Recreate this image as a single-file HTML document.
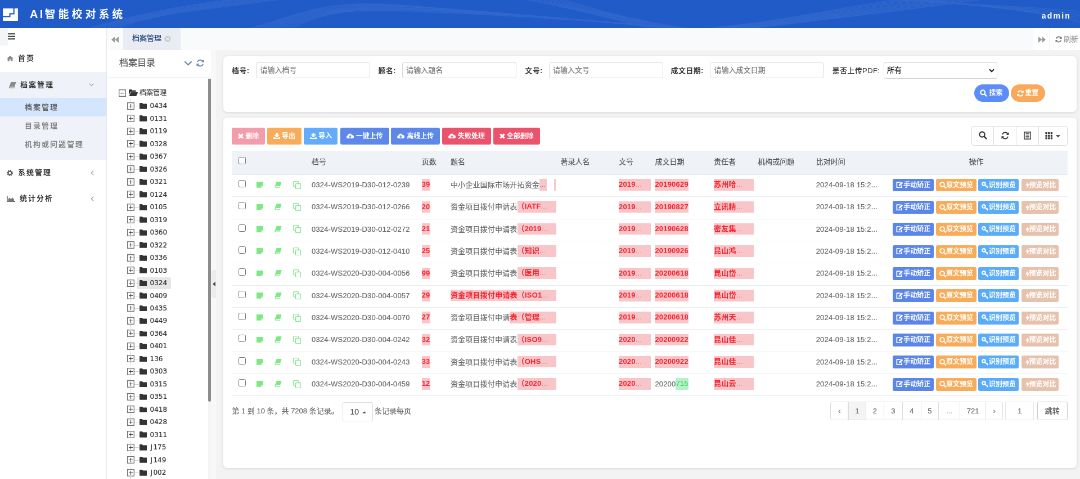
<!DOCTYPE html><html lang="zh-CN"><head><meta charset="utf-8"><title>AI智能校对系统</title><style>
*{box-sizing:border-box;margin:0;padding:0}
html,body{width:1080px;height:479px;overflow:hidden;background:#f3f3f4}
body{font-family:"Liberation Sans","Noto Sans CJK SC",sans-serif;font-size:13px;color:#676a6c;-webkit-text-stroke:.22px}
.pk,.btn,#side .it,#side .sub,#hdr div{-webkit-text-stroke:0}
.btn.ab{-webkit-text-stroke:.25px}
#app{position:absolute;left:0;top:0;width:1920px;height:852px;transform:scale(.5625);transform-origin:0 0;background:#f3f3f4;overflow:hidden;will-change:transform}
.abs{position:absolute}
#hdr{left:0;top:0;width:1920px;height:50px;background:#205bc8;overflow:hidden}
#hdr .title{left:53px;top:0;line-height:50px;color:#fff;font-size:19px;font-weight:bold;letter-spacing:4.95px;white-space:nowrap}
#hdr .title b{font-size:20px;letter-spacing:3.3px}
#hdr .user{right:16px;top:0;line-height:56px;color:#fff;font-size:14px;font-weight:bold;letter-spacing:2.2px}
#side{left:0;top:50px;width:189px;height:802px;background:#fff}
#side .it{left:0;width:189px;height:46px;line-height:46px;font-weight:bold;letter-spacing:2px;color:#333;white-space:nowrap}
#side .sub{left:0;width:189px;height:33px;line-height:33px;letter-spacing:2px;color:#858585;padding-left:44px;white-space:nowrap;font-weight:bold}
#side .grp{left:0;top:78px;width:189px;height:156px;background:#eff3f9}
#side .act{background:#d4e6fe}
#side .chev{position:absolute;right:22px;top:0;font-weight:normal;color:#999;font-size:12px;letter-spacing:0}
#tabs{left:190px;top:50px;width:1730px;height:39px;background:#f9fafb}
#tabs .tab{left:29px;top:0;width:101.5px;height:39px;background:#e9edf3;color:#1e3c78;line-height:36.5px;padding-left:16px;white-space:nowrap}
#tree{left:190px;top:89px;width:185px;height:763px;background:#fff;overflow:hidden}
#tree .hd{left:0;top:0;width:185px;height:49px;border-bottom:1px solid #eceef1;line-height:46px;padding-left:22px;font-size:16px;color:#5a5a5a}
.tn{position:absolute;height:22px;line-height:21px;font-family:"DejaVu Sans","Noto Sans CJK SC",sans-serif;font-size:12px;color:#333;white-space:nowrap}
.bx{position:absolute;width:13px;height:13px;border:1px solid #757575;background:#fff}
.bx:before{content:"";position:absolute;left:2px;top:5px;width:7px;height:1px;background:#555}
.bx.p:after{content:"";position:absolute;left:5px;top:2px;width:1px;height:7px;background:#555}
.card{background:#fff;border-radius:6.5px;box-shadow:0 1px 5px rgba(0,0,0,.13)}
label.l{position:absolute;top:0;line-height:29px;font-weight:bold;color:#333;white-space:nowrap;-webkit-text-stroke:0;letter-spacing:.4px}
.inp{position:absolute;top:0;width:203px;height:28.8px;border:1px solid #d6d9dd;border-radius:3px;background:#fff;line-height:26.8px;padding-left:6.5px;color:#767676;font-size:13px;white-space:nowrap}
.btn{position:absolute;color:#fff;font-size:12px;font-weight:bold;text-align:center;white-space:nowrap;border-radius:3px}
.tb{top:17.7px;height:30px;line-height:30px}
table{border-collapse:collapse}
.th{position:absolute;top:0;line-height:40.4px;color:#555;white-space:nowrap}
.row{position:absolute;left:0;width:1486px;height:39.35px;border-top:1px solid #e9ebee}
.c{position:absolute;top:0;line-height:35.5px;white-space:nowrap;letter-spacing:.17px}
.c.f{display:flex;align-items:center;height:35.5px}
.c.f .pk{flex:1 1 0;min-width:0;top:-.4px}
.pk{display:inline-block;background:#f8c5c9;color:#f5222d;font-weight:bold;line-height:20.6px;vertical-align:middle;position:relative;top:-1.1px;letter-spacing:.2px}
.gn{display:inline-block;background:#b5f2c6;color:#46d476;line-height:20.6px;vertical-align:middle;position:relative;top:-1.1px}
.dots{color:#c58d93;font-weight:normal}
.cb{position:absolute;width:13px;height:13px;border:1px solid #767676;border-radius:2.5px;background:#fff}
.ab{top:6.7px;height:22.8px;line-height:22.8px;font-weight:500;font-size:12px;border-radius:3px}
.pg{position:absolute;top:0;height:33px;line-height:31px;border:1px solid #ddd;text-align:center;color:#676a6c;background:#fff}
svg{display:block;position:absolute}
</style></head><body><div id="app">
<div id="hdr" class="abs">
<svg width="1920" height="50" viewBox="0 0 1920 50" style="left:0;top:0"><g fill="none" stroke="#ffffff" stroke-width="1.2" opacity=".075">
<path d="M440 52 C 520 30, 560 8, 640 7 S 950 30, 1180 48"/>
<path d="M447 52 C 525 29, 566 8, 648 8 S 960 30, 1186 48"/>
<path d="M454 52 C 530 28, 572 9, 656 9 S 970 31, 1192 49"/>
<path d="M461 52 C 535 27, 578 10, 664 10 S 980 31, 1198 49"/>
<path d="M468 52 C 540 26, 584 11, 672 11 S 990 32, 1204 50"/>
<path d="M475 52 C 545 25, 590 12, 680 13 S 1000 32, 1210 51"/>
<path d="M482 52 C 550 24, 596 12, 688 14 S 1010 33, 1216 51"/>
<path d="M489 52 C 555 23, 602 13, 696 15 S 1020 33, 1222 52"/>
<path d="M496 52 C 560 22, 608 14, 704 16 S 1030 34, 1228 52"/>
<path d="M503 52 C 565 21, 614 15, 712 17 S 1040 34, 1234 53"/>
<path d="M510 52 C 570 20, 620 16, 720 19 S 1050 35, 1240 54"/>
<path d="M517 52 C 575 19, 626 16, 728 20 S 1060 35, 1246 54"/>
<path d="M1230 52 C 1360 44, 1470 18, 1600 -2"/>
<path d="M1239 52 C 1366 43, 1478 18, 1614 -2"/>
<path d="M1248 52 C 1372 43, 1486 19, 1628 -2"/>
<path d="M1257 52 C 1378 42, 1494 20, 1642 -2"/>
<path d="M1266 52 C 1384 42, 1502 21, 1656 -2"/>
<path d="M1275 52 C 1390 41, 1510 22, 1670 -2"/>
<path d="M1284 52 C 1396 41, 1518 22, 1684 -2"/>
<path d="M1293 52 C 1402 40, 1526 23, 1698 -2"/>
<path d="M1302 52 C 1408 40, 1534 24, 1712 -2"/>
<path d="M1311 52 C 1414 39, 1542 25, 1726 -2"/>
<path d="M1320 52 C 1420 39, 1550 26, 1740 -2"/>
<path d="M1329 52 C 1426 38, 1558 26, 1754 -2"/>
<path d="M930 -2 C 1010 14, 1080 30, 1160 52"/>
<path d="M940 -2 C 1018 15, 1088 31, 1170 52"/>
<path d="M950 -2 C 1026 16, 1096 32, 1180 52"/>
<path d="M960 -2 C 1034 17, 1104 33, 1190 52"/>
<path d="M970 -2 C 1042 18, 1112 34, 1200 52"/>
<path d="M980 -2 C 1050 19, 1120 35, 1210 52"/>
<path d="M990 -2 C 1058 20, 1128 36, 1220 52"/>
<path d="M1000 -2 C 1066 21, 1136 37, 1230 52"/>
<path d="M150 52 C 230 30, 300 12, 420 -2"/>
<path d="M158 52 C 236 29, 308 13, 432 -2"/>
<path d="M166 52 C 242 28, 316 14, 444 -2"/>
<path d="M174 52 C 248 27, 324 15, 456 -2"/>
<path d="M182 52 C 254 26, 332 16, 468 -2"/>
<path d="M190 52 C 260 25, 340 17, 480 -2"/>
<path d="M198 52 C 266 24, 348 18, 492 -2"/>
<path d="M206 52 C 272 23, 356 19, 504 -2"/>
<path d="M1560 -2 C 1680 6, 1800 10, 1920 20"/>
<path d="M1576 -2 C 1690 7, 1808 11, 1920 24"/>
<path d="M1592 -2 C 1700 8, 1816 13, 1920 28"/>
<path d="M1608 -2 C 1710 9, 1824 14, 1920 32"/>
<path d="M1624 -2 C 1720 10, 1832 16, 1920 36"/>
<path d="M1640 -2 C 1730 11, 1840 17, 1920 40"/>
</g></svg>
<svg width="27" height="22" viewBox="0 0 28 23" style="left:4.6px;top:14.6px"><rect width="28" height="23" fill="#fff"/><path d="M0 15H13V9.8H20.5V0" fill="none" stroke="#205bc8" stroke-width="2.2"/></svg>
<div class="abs title"><b>AI</b>智能校对系统</div><div class="abs user">admin</div></div>
<div id="side" class="abs">
<div class="abs grp"></div>
<div class="abs" style="left:0;top:0;width:13.5px;height:31px;background:#f4f5f9"></div>
<svg width="14" height="12" viewBox="0 0 14 12" style="left:14px;top:9.3px"><path d="M0 1.2H13M0 5.7H13M0 10.2H13" stroke="#333" stroke-width="2"/></svg>
<div class="abs it" style="top:31px"><svg width="12" height="10" viewBox="0 0 12 10" style="left:12px;top:18px"><path d="M6 0L0 5H1.6V10H4.8V6.5H7.2V10H10.4V5H12Z" fill="#8a8a8a"/></svg><span style="position:absolute;left:32px">首页</span></div>
<div class="abs it" style="top:78px"><svg width="13" height="11" viewBox="0 0 13 11" style="left:16.2px;top:18px"><path d="M3.5 0H12.5L10 8.2H2.2C1.4 8.2 1.2 9.6 2 9.6H10.5L10 11H1.5C0 11 -.3 9 .6 7.4Z" fill="#8a8a8a"/></svg><span style="position:absolute;left:36px">档案管理</span><span class="chev"><svg width="9" height="6" viewBox="0 0 9 6" style="position:absolute;right:0;top:20px"><path d="M.7 .7L4.5 4.5L8.3 .7" fill="none" stroke="#999" stroke-width="1.2"/></svg></span></div>
<div class="abs sub act" style="top:124px;color:#666">档案管理</div>
<div class="abs sub" style="top:157px">目录管理</div>
<div class="abs sub" style="top:190px">机构或问题管理</div>
<div class="abs it" style="top:234px"><svg width="11" height="11" viewBox="0 0 12 12" style="left:12px;top:17.5px"><circle cx="6" cy="6" r="5" fill="none" stroke="#555" stroke-width="2" stroke-dasharray="1.96 1.96"/><circle cx="6" cy="6" r="3.3" fill="none" stroke="#555" stroke-width="2.2"/></svg><span style="position:absolute;left:32px">系统管理</span><span class="chev"><svg width="6" height="9" viewBox="0 0 6 9" style="position:absolute;right:0;top:19px"><path d="M5.3 .7L1.2 4.5L5.3 8.3" fill="none" stroke="#999" stroke-width="1.2"/></svg></span></div>
<div class="abs it" style="top:280px"><svg width="15" height="11" viewBox="0 0 15 11" style="left:12px;top:18px"><path d="M.8 0V10.2H15" fill="none" stroke="#666" stroke-width="1.7"/><path d="M2.5 9V5.5L5 3.5L7.5 6L10 3L13 6.5V9Z" fill="#777"/></svg><span style="position:absolute;left:35px">统计分析</span><span class="chev"><svg width="6" height="9" viewBox="0 0 6 9" style="position:absolute;right:0;top:19px"><path d="M5.3 .7L1.2 4.5L5.3 8.3" fill="none" stroke="#999" stroke-width="1.2"/></svg></span></div>
</div>
<div class="abs" style="left:189px;top:50px;width:1px;height:802px;background:#e4e6ea"></div>
<div id="tabs" class="abs">
<div class="abs" style="left:0;top:0;width:29px;height:39px;background:#fbfbfc"></div>
<svg width="13" height="11" viewBox="0 0 13 11" style="left:8px;top:14.5px"><path d="M6.3 0V11L0 5.5ZM13 0V11L6.7 5.5Z" fill="#9a9a9a"/></svg>
<div class="abs tab">档案管理</div>
<svg width="12" height="12" viewBox="0 0 12 12" style="left:102px;top:12.8px"><circle cx="6" cy="6" r="5.6" fill="#c9cdd3"/><path d="M3.8 3.8L8.2 8.2M8.2 3.8L3.8 8.2" stroke="#eef1f5" stroke-width="1.5"/></svg>
<div class="abs" style="left:1647px;top:0;width:83px;height:39px;background:#fff"></div>
<div class="abs" style="left:1675px;top:0;width:1px;height:39px;background:#f0f1f3"></div>
<svg width="13" height="11" viewBox="0 0 13 11" style="left:1656px;top:15px"><path d="M0 0V11L6.3 5.5ZM6.7 0V11L13 5.5Z" fill="#9a9a9a"/></svg>
<svg width="12" height="12" viewBox="0 0 12 12" style="left:1686px;top:14px"><path d="M10.3 4.2A4.6 4.6 0 0 0 1.7 4.4M1.7 7.8A4.6 4.6 0 0 0 10.3 7.6" fill="none" stroke="#777" stroke-width="1.6"/><path d="M11.5 1V5H7.5ZM.5 11V7H4.5Z" fill="#777"/></svg>
<div class="abs" style="left:1701px;top:0;line-height:39px;color:#999;white-space:nowrap">刷新</div>
</div>
<div id="tree" class="abs">
<div class="abs hd">档案目录</div>
<svg width="15" height="9" viewBox="0 0 15 9" style="left:137px;top:19px"><path d="M1.3 1.3L7.5 7.3L13.7 1.3" fill="none" stroke="#6782a8" stroke-width="2.1"/></svg>
<svg width="14" height="14" viewBox="0 0 12 12" style="left:159px;top:16px"><path d="M10.3 4.2A4.6 4.6 0 0 0 1.7 4.4M1.7 7.8A4.6 4.6 0 0 0 10.3 7.6" fill="none" stroke="#6782a8" stroke-width="1.5"/><path d="M11.6 .8V5H7.4ZM.4 11.2V7H4.6Z" fill="#6782a8"/></svg>
<div class="abs" style="left:42px;top:86px;width:0;height:700px;border-left:1px dotted #c8c8c8"></div>
<svg width="13" height="13" viewBox="0 0 13 13" style="left:21px;top:69.5px"><rect x=".6" y=".6" width="11.8" height="11.8" fill="#fff" stroke="#707070" stroke-width="1.5"/><path d="M3 6.5H10" stroke="#444" stroke-width="1.2"/></svg>
<svg width="16" height="12" viewBox="0 0 16 12" style="left:39px;top:70px"><path d="M0 1.3C0 .6 .6 0 1.3 0H4.8L6.3 1.6H11.5C12.2 1.6 12.6 2.1 12.6 2.8V4H4.2C3.4 4 2.9 4.4 2.6 5L0 10.2Z" fill="#333"/><path d="M3.9 5H15.3C15.9 5 16.2 5.4 15.9 6L13.5 11.2C13.3 11.7 12.8 12 12.2 12H.6L3.1 5.8C3.3 5.3 3.5 5 3.9 5Z" fill="#333"/></svg>
<div class="tn" style="left:58px;top:65.5px">档案管理</div>
<div class="abs" style="left:49px;top:99.3px;width:8px;height:0;border-top:1px dotted #c8c8c8"></div>
<svg width="13" height="13" viewBox="0 0 13 13" style="left:36px;top:92.8px"><rect x=".6" y=".6" width="11.8" height="11.8" fill="#fff" stroke="#707070" stroke-width="1.5"/><path d="M3 6.5H10M6.5 3V10" stroke="#444" stroke-width="1.2"/></svg>
<svg width="13.6" height="10.8" viewBox="0 0 15 12" style="left:57.6px;top:94px"><path d="M0 1.3C0 .6 .6 0 1.3 0H5.2L6.8 1.7H13.6C14.4 1.7 15 2.3 15 3V10.7C15 11.4 14.4 12 13.6 12H1.3C.6 12 0 11.4 0 10.7Z" fill="#333"/></svg>
<div class="tn" style="left:76.5px;top:89.3px">0434</div>
<div class="abs" style="left:49px;top:121.78px;width:8px;height:0;border-top:1px dotted #c8c8c8"></div>
<svg width="13" height="13" viewBox="0 0 13 13" style="left:36px;top:115.28px"><rect x=".6" y=".6" width="11.8" height="11.8" fill="#fff" stroke="#707070" stroke-width="1.5"/><path d="M3 6.5H10M6.5 3V10" stroke="#444" stroke-width="1.2"/></svg>
<svg width="13.6" height="10.8" viewBox="0 0 15 12" style="left:57.6px;top:116.48px"><path d="M0 1.3C0 .6 .6 0 1.3 0H5.2L6.8 1.7H13.6C14.4 1.7 15 2.3 15 3V10.7C15 11.4 14.4 12 13.6 12H1.3C.6 12 0 11.4 0 10.7Z" fill="#333"/></svg>
<div class="tn" style="left:76.5px;top:111.78px">0131</div>
<div class="abs" style="left:49px;top:144.26px;width:8px;height:0;border-top:1px dotted #c8c8c8"></div>
<svg width="13" height="13" viewBox="0 0 13 13" style="left:36px;top:137.76px"><rect x=".6" y=".6" width="11.8" height="11.8" fill="#fff" stroke="#707070" stroke-width="1.5"/><path d="M3 6.5H10M6.5 3V10" stroke="#444" stroke-width="1.2"/></svg>
<svg width="13.6" height="10.8" viewBox="0 0 15 12" style="left:57.6px;top:138.96px"><path d="M0 1.3C0 .6 .6 0 1.3 0H5.2L6.8 1.7H13.6C14.4 1.7 15 2.3 15 3V10.7C15 11.4 14.4 12 13.6 12H1.3C.6 12 0 11.4 0 10.7Z" fill="#333"/></svg>
<div class="tn" style="left:76.5px;top:134.26px">0119</div>
<div class="abs" style="left:49px;top:166.74px;width:8px;height:0;border-top:1px dotted #c8c8c8"></div>
<svg width="13" height="13" viewBox="0 0 13 13" style="left:36px;top:160.24px"><rect x=".6" y=".6" width="11.8" height="11.8" fill="#fff" stroke="#707070" stroke-width="1.5"/><path d="M3 6.5H10M6.5 3V10" stroke="#444" stroke-width="1.2"/></svg>
<svg width="13.6" height="10.8" viewBox="0 0 15 12" style="left:57.6px;top:161.44px"><path d="M0 1.3C0 .6 .6 0 1.3 0H5.2L6.8 1.7H13.6C14.4 1.7 15 2.3 15 3V10.7C15 11.4 14.4 12 13.6 12H1.3C.6 12 0 11.4 0 10.7Z" fill="#333"/></svg>
<div class="tn" style="left:76.5px;top:156.74px">0328</div>
<div class="abs" style="left:49px;top:189.22px;width:8px;height:0;border-top:1px dotted #c8c8c8"></div>
<svg width="13" height="13" viewBox="0 0 13 13" style="left:36px;top:182.72px"><rect x=".6" y=".6" width="11.8" height="11.8" fill="#fff" stroke="#707070" stroke-width="1.5"/><path d="M3 6.5H10M6.5 3V10" stroke="#444" stroke-width="1.2"/></svg>
<svg width="13.6" height="10.8" viewBox="0 0 15 12" style="left:57.6px;top:183.92px"><path d="M0 1.3C0 .6 .6 0 1.3 0H5.2L6.8 1.7H13.6C14.4 1.7 15 2.3 15 3V10.7C15 11.4 14.4 12 13.6 12H1.3C.6 12 0 11.4 0 10.7Z" fill="#333"/></svg>
<div class="tn" style="left:76.5px;top:179.22px">0367</div>
<div class="abs" style="left:49px;top:211.7px;width:8px;height:0;border-top:1px dotted #c8c8c8"></div>
<svg width="13" height="13" viewBox="0 0 13 13" style="left:36px;top:205.2px"><rect x=".6" y=".6" width="11.8" height="11.8" fill="#fff" stroke="#707070" stroke-width="1.5"/><path d="M3 6.5H10M6.5 3V10" stroke="#444" stroke-width="1.2"/></svg>
<svg width="13.6" height="10.8" viewBox="0 0 15 12" style="left:57.6px;top:206.4px"><path d="M0 1.3C0 .6 .6 0 1.3 0H5.2L6.8 1.7H13.6C14.4 1.7 15 2.3 15 3V10.7C15 11.4 14.4 12 13.6 12H1.3C.6 12 0 11.4 0 10.7Z" fill="#333"/></svg>
<div class="tn" style="left:76.5px;top:201.7px">0326</div>
<div class="abs" style="left:49px;top:234.18px;width:8px;height:0;border-top:1px dotted #c8c8c8"></div>
<svg width="13" height="13" viewBox="0 0 13 13" style="left:36px;top:227.68px"><rect x=".6" y=".6" width="11.8" height="11.8" fill="#fff" stroke="#707070" stroke-width="1.5"/><path d="M3 6.5H10M6.5 3V10" stroke="#444" stroke-width="1.2"/></svg>
<svg width="13.6" height="10.8" viewBox="0 0 15 12" style="left:57.6px;top:228.88px"><path d="M0 1.3C0 .6 .6 0 1.3 0H5.2L6.8 1.7H13.6C14.4 1.7 15 2.3 15 3V10.7C15 11.4 14.4 12 13.6 12H1.3C.6 12 0 11.4 0 10.7Z" fill="#333"/></svg>
<div class="tn" style="left:76.5px;top:224.18px">0321</div>
<div class="abs" style="left:49px;top:256.66px;width:8px;height:0;border-top:1px dotted #c8c8c8"></div>
<svg width="13" height="13" viewBox="0 0 13 13" style="left:36px;top:250.16px"><rect x=".6" y=".6" width="11.8" height="11.8" fill="#fff" stroke="#707070" stroke-width="1.5"/><path d="M3 6.5H10M6.5 3V10" stroke="#444" stroke-width="1.2"/></svg>
<svg width="13.6" height="10.8" viewBox="0 0 15 12" style="left:57.6px;top:251.36px"><path d="M0 1.3C0 .6 .6 0 1.3 0H5.2L6.8 1.7H13.6C14.4 1.7 15 2.3 15 3V10.7C15 11.4 14.4 12 13.6 12H1.3C.6 12 0 11.4 0 10.7Z" fill="#333"/></svg>
<div class="tn" style="left:76.5px;top:246.66px">0124</div>
<div class="abs" style="left:49px;top:279.14px;width:8px;height:0;border-top:1px dotted #c8c8c8"></div>
<svg width="13" height="13" viewBox="0 0 13 13" style="left:36px;top:272.64px"><rect x=".6" y=".6" width="11.8" height="11.8" fill="#fff" stroke="#707070" stroke-width="1.5"/><path d="M3 6.5H10M6.5 3V10" stroke="#444" stroke-width="1.2"/></svg>
<svg width="13.6" height="10.8" viewBox="0 0 15 12" style="left:57.6px;top:273.84px"><path d="M0 1.3C0 .6 .6 0 1.3 0H5.2L6.8 1.7H13.6C14.4 1.7 15 2.3 15 3V10.7C15 11.4 14.4 12 13.6 12H1.3C.6 12 0 11.4 0 10.7Z" fill="#333"/></svg>
<div class="tn" style="left:76.5px;top:269.14px">0105</div>
<div class="abs" style="left:49px;top:301.62px;width:8px;height:0;border-top:1px dotted #c8c8c8"></div>
<svg width="13" height="13" viewBox="0 0 13 13" style="left:36px;top:295.12px"><rect x=".6" y=".6" width="11.8" height="11.8" fill="#fff" stroke="#707070" stroke-width="1.5"/><path d="M3 6.5H10M6.5 3V10" stroke="#444" stroke-width="1.2"/></svg>
<svg width="13.6" height="10.8" viewBox="0 0 15 12" style="left:57.6px;top:296.32px"><path d="M0 1.3C0 .6 .6 0 1.3 0H5.2L6.8 1.7H13.6C14.4 1.7 15 2.3 15 3V10.7C15 11.4 14.4 12 13.6 12H1.3C.6 12 0 11.4 0 10.7Z" fill="#333"/></svg>
<div class="tn" style="left:76.5px;top:291.62px">0319</div>
<div class="abs" style="left:49px;top:324.1px;width:8px;height:0;border-top:1px dotted #c8c8c8"></div>
<svg width="13" height="13" viewBox="0 0 13 13" style="left:36px;top:317.6px"><rect x=".6" y=".6" width="11.8" height="11.8" fill="#fff" stroke="#707070" stroke-width="1.5"/><path d="M3 6.5H10M6.5 3V10" stroke="#444" stroke-width="1.2"/></svg>
<svg width="13.6" height="10.8" viewBox="0 0 15 12" style="left:57.6px;top:318.8px"><path d="M0 1.3C0 .6 .6 0 1.3 0H5.2L6.8 1.7H13.6C14.4 1.7 15 2.3 15 3V10.7C15 11.4 14.4 12 13.6 12H1.3C.6 12 0 11.4 0 10.7Z" fill="#333"/></svg>
<div class="tn" style="left:76.5px;top:314.1px">0360</div>
<div class="abs" style="left:49px;top:346.58px;width:8px;height:0;border-top:1px dotted #c8c8c8"></div>
<svg width="13" height="13" viewBox="0 0 13 13" style="left:36px;top:340.08px"><rect x=".6" y=".6" width="11.8" height="11.8" fill="#fff" stroke="#707070" stroke-width="1.5"/><path d="M3 6.5H10M6.5 3V10" stroke="#444" stroke-width="1.2"/></svg>
<svg width="13.6" height="10.8" viewBox="0 0 15 12" style="left:57.6px;top:341.28px"><path d="M0 1.3C0 .6 .6 0 1.3 0H5.2L6.8 1.7H13.6C14.4 1.7 15 2.3 15 3V10.7C15 11.4 14.4 12 13.6 12H1.3C.6 12 0 11.4 0 10.7Z" fill="#333"/></svg>
<div class="tn" style="left:76.5px;top:336.58px">0322</div>
<div class="abs" style="left:49px;top:369.06px;width:8px;height:0;border-top:1px dotted #c8c8c8"></div>
<svg width="13" height="13" viewBox="0 0 13 13" style="left:36px;top:362.56px"><rect x=".6" y=".6" width="11.8" height="11.8" fill="#fff" stroke="#707070" stroke-width="1.5"/><path d="M3 6.5H10M6.5 3V10" stroke="#444" stroke-width="1.2"/></svg>
<svg width="13.6" height="10.8" viewBox="0 0 15 12" style="left:57.6px;top:363.76px"><path d="M0 1.3C0 .6 .6 0 1.3 0H5.2L6.8 1.7H13.6C14.4 1.7 15 2.3 15 3V10.7C15 11.4 14.4 12 13.6 12H1.3C.6 12 0 11.4 0 10.7Z" fill="#333"/></svg>
<div class="tn" style="left:76.5px;top:359.06px">0336</div>
<div class="abs" style="left:49px;top:391.54px;width:8px;height:0;border-top:1px dotted #c8c8c8"></div>
<svg width="13" height="13" viewBox="0 0 13 13" style="left:36px;top:385.04px"><rect x=".6" y=".6" width="11.8" height="11.8" fill="#fff" stroke="#707070" stroke-width="1.5"/><path d="M3 6.5H10M6.5 3V10" stroke="#444" stroke-width="1.2"/></svg>
<svg width="13.6" height="10.8" viewBox="0 0 15 12" style="left:57.6px;top:386.24px"><path d="M0 1.3C0 .6 .6 0 1.3 0H5.2L6.8 1.7H13.6C14.4 1.7 15 2.3 15 3V10.7C15 11.4 14.4 12 13.6 12H1.3C.6 12 0 11.4 0 10.7Z" fill="#333"/></svg>
<div class="tn" style="left:76.5px;top:381.54px">0103</div>
<div class="abs" style="left:53px;top:403.52px;width:60.5px;height:21px;background:#e6e6e6;border-radius:3px"></div>
<div class="abs" style="left:49px;top:414.02px;width:8px;height:0;border-top:1px dotted #c8c8c8"></div>
<svg width="13" height="13" viewBox="0 0 13 13" style="left:36px;top:407.52px"><rect x=".6" y=".6" width="11.8" height="11.8" fill="#fff" stroke="#707070" stroke-width="1.5"/><path d="M3 6.5H10M6.5 3V10" stroke="#444" stroke-width="1.2"/></svg>
<svg width="13.6" height="10.8" viewBox="0 0 15 12" style="left:57.6px;top:408.72px"><path d="M0 1.3C0 .6 .6 0 1.3 0H5.2L6.8 1.7H13.6C14.4 1.7 15 2.3 15 3V10.7C15 11.4 14.4 12 13.6 12H1.3C.6 12 0 11.4 0 10.7Z" fill="#333"/></svg>
<div class="tn" style="left:76.5px;top:404.02px">0324</div>
<div class="abs" style="left:49px;top:436.5px;width:8px;height:0;border-top:1px dotted #c8c8c8"></div>
<svg width="13" height="13" viewBox="0 0 13 13" style="left:36px;top:430px"><rect x=".6" y=".6" width="11.8" height="11.8" fill="#fff" stroke="#707070" stroke-width="1.5"/><path d="M3 6.5H10M6.5 3V10" stroke="#444" stroke-width="1.2"/></svg>
<svg width="13.6" height="10.8" viewBox="0 0 15 12" style="left:57.6px;top:431.2px"><path d="M0 1.3C0 .6 .6 0 1.3 0H5.2L6.8 1.7H13.6C14.4 1.7 15 2.3 15 3V10.7C15 11.4 14.4 12 13.6 12H1.3C.6 12 0 11.4 0 10.7Z" fill="#333"/></svg>
<div class="tn" style="left:76.5px;top:426.5px">0409</div>
<div class="abs" style="left:49px;top:458.98px;width:8px;height:0;border-top:1px dotted #c8c8c8"></div>
<svg width="13" height="13" viewBox="0 0 13 13" style="left:36px;top:452.48px"><rect x=".6" y=".6" width="11.8" height="11.8" fill="#fff" stroke="#707070" stroke-width="1.5"/><path d="M3 6.5H10M6.5 3V10" stroke="#444" stroke-width="1.2"/></svg>
<svg width="13.6" height="10.8" viewBox="0 0 15 12" style="left:57.6px;top:453.68px"><path d="M0 1.3C0 .6 .6 0 1.3 0H5.2L6.8 1.7H13.6C14.4 1.7 15 2.3 15 3V10.7C15 11.4 14.4 12 13.6 12H1.3C.6 12 0 11.4 0 10.7Z" fill="#333"/></svg>
<div class="tn" style="left:76.5px;top:448.98px">0435</div>
<div class="abs" style="left:49px;top:481.46px;width:8px;height:0;border-top:1px dotted #c8c8c8"></div>
<svg width="13" height="13" viewBox="0 0 13 13" style="left:36px;top:474.96px"><rect x=".6" y=".6" width="11.8" height="11.8" fill="#fff" stroke="#707070" stroke-width="1.5"/><path d="M3 6.5H10M6.5 3V10" stroke="#444" stroke-width="1.2"/></svg>
<svg width="13.6" height="10.8" viewBox="0 0 15 12" style="left:57.6px;top:476.16px"><path d="M0 1.3C0 .6 .6 0 1.3 0H5.2L6.8 1.7H13.6C14.4 1.7 15 2.3 15 3V10.7C15 11.4 14.4 12 13.6 12H1.3C.6 12 0 11.4 0 10.7Z" fill="#333"/></svg>
<div class="tn" style="left:76.5px;top:471.46px">0449</div>
<div class="abs" style="left:49px;top:503.94px;width:8px;height:0;border-top:1px dotted #c8c8c8"></div>
<svg width="13" height="13" viewBox="0 0 13 13" style="left:36px;top:497.44px"><rect x=".6" y=".6" width="11.8" height="11.8" fill="#fff" stroke="#707070" stroke-width="1.5"/><path d="M3 6.5H10M6.5 3V10" stroke="#444" stroke-width="1.2"/></svg>
<svg width="13.6" height="10.8" viewBox="0 0 15 12" style="left:57.6px;top:498.64px"><path d="M0 1.3C0 .6 .6 0 1.3 0H5.2L6.8 1.7H13.6C14.4 1.7 15 2.3 15 3V10.7C15 11.4 14.4 12 13.6 12H1.3C.6 12 0 11.4 0 10.7Z" fill="#333"/></svg>
<div class="tn" style="left:76.5px;top:493.94px">0364</div>
<div class="abs" style="left:49px;top:526.42px;width:8px;height:0;border-top:1px dotted #c8c8c8"></div>
<svg width="13" height="13" viewBox="0 0 13 13" style="left:36px;top:519.92px"><rect x=".6" y=".6" width="11.8" height="11.8" fill="#fff" stroke="#707070" stroke-width="1.5"/><path d="M3 6.5H10M6.5 3V10" stroke="#444" stroke-width="1.2"/></svg>
<svg width="13.6" height="10.8" viewBox="0 0 15 12" style="left:57.6px;top:521.12px"><path d="M0 1.3C0 .6 .6 0 1.3 0H5.2L6.8 1.7H13.6C14.4 1.7 15 2.3 15 3V10.7C15 11.4 14.4 12 13.6 12H1.3C.6 12 0 11.4 0 10.7Z" fill="#333"/></svg>
<div class="tn" style="left:76.5px;top:516.42px">0401</div>
<div class="abs" style="left:49px;top:548.9px;width:8px;height:0;border-top:1px dotted #c8c8c8"></div>
<svg width="13" height="13" viewBox="0 0 13 13" style="left:36px;top:542.4px"><rect x=".6" y=".6" width="11.8" height="11.8" fill="#fff" stroke="#707070" stroke-width="1.5"/><path d="M3 6.5H10M6.5 3V10" stroke="#444" stroke-width="1.2"/></svg>
<svg width="13.6" height="10.8" viewBox="0 0 15 12" style="left:57.6px;top:543.6px"><path d="M0 1.3C0 .6 .6 0 1.3 0H5.2L6.8 1.7H13.6C14.4 1.7 15 2.3 15 3V10.7C15 11.4 14.4 12 13.6 12H1.3C.6 12 0 11.4 0 10.7Z" fill="#333"/></svg>
<div class="tn" style="left:76.5px;top:538.9px">136</div>
<div class="abs" style="left:49px;top:571.38px;width:8px;height:0;border-top:1px dotted #c8c8c8"></div>
<svg width="13" height="13" viewBox="0 0 13 13" style="left:36px;top:564.88px"><rect x=".6" y=".6" width="11.8" height="11.8" fill="#fff" stroke="#707070" stroke-width="1.5"/><path d="M3 6.5H10M6.5 3V10" stroke="#444" stroke-width="1.2"/></svg>
<svg width="13.6" height="10.8" viewBox="0 0 15 12" style="left:57.6px;top:566.08px"><path d="M0 1.3C0 .6 .6 0 1.3 0H5.2L6.8 1.7H13.6C14.4 1.7 15 2.3 15 3V10.7C15 11.4 14.4 12 13.6 12H1.3C.6 12 0 11.4 0 10.7Z" fill="#333"/></svg>
<div class="tn" style="left:76.5px;top:561.38px">0303</div>
<div class="abs" style="left:49px;top:593.86px;width:8px;height:0;border-top:1px dotted #c8c8c8"></div>
<svg width="13" height="13" viewBox="0 0 13 13" style="left:36px;top:587.36px"><rect x=".6" y=".6" width="11.8" height="11.8" fill="#fff" stroke="#707070" stroke-width="1.5"/><path d="M3 6.5H10M6.5 3V10" stroke="#444" stroke-width="1.2"/></svg>
<svg width="13.6" height="10.8" viewBox="0 0 15 12" style="left:57.6px;top:588.56px"><path d="M0 1.3C0 .6 .6 0 1.3 0H5.2L6.8 1.7H13.6C14.4 1.7 15 2.3 15 3V10.7C15 11.4 14.4 12 13.6 12H1.3C.6 12 0 11.4 0 10.7Z" fill="#333"/></svg>
<div class="tn" style="left:76.5px;top:583.86px">0315</div>
<div class="abs" style="left:49px;top:616.34px;width:8px;height:0;border-top:1px dotted #c8c8c8"></div>
<svg width="13" height="13" viewBox="0 0 13 13" style="left:36px;top:609.84px"><rect x=".6" y=".6" width="11.8" height="11.8" fill="#fff" stroke="#707070" stroke-width="1.5"/><path d="M3 6.5H10M6.5 3V10" stroke="#444" stroke-width="1.2"/></svg>
<svg width="13.6" height="10.8" viewBox="0 0 15 12" style="left:57.6px;top:611.04px"><path d="M0 1.3C0 .6 .6 0 1.3 0H5.2L6.8 1.7H13.6C14.4 1.7 15 2.3 15 3V10.7C15 11.4 14.4 12 13.6 12H1.3C.6 12 0 11.4 0 10.7Z" fill="#333"/></svg>
<div class="tn" style="left:76.5px;top:606.34px">0351</div>
<div class="abs" style="left:49px;top:638.82px;width:8px;height:0;border-top:1px dotted #c8c8c8"></div>
<svg width="13" height="13" viewBox="0 0 13 13" style="left:36px;top:632.32px"><rect x=".6" y=".6" width="11.8" height="11.8" fill="#fff" stroke="#707070" stroke-width="1.5"/><path d="M3 6.5H10M6.5 3V10" stroke="#444" stroke-width="1.2"/></svg>
<svg width="13.6" height="10.8" viewBox="0 0 15 12" style="left:57.6px;top:633.52px"><path d="M0 1.3C0 .6 .6 0 1.3 0H5.2L6.8 1.7H13.6C14.4 1.7 15 2.3 15 3V10.7C15 11.4 14.4 12 13.6 12H1.3C.6 12 0 11.4 0 10.7Z" fill="#333"/></svg>
<div class="tn" style="left:76.5px;top:628.82px">0418</div>
<div class="abs" style="left:49px;top:661.3px;width:8px;height:0;border-top:1px dotted #c8c8c8"></div>
<svg width="13" height="13" viewBox="0 0 13 13" style="left:36px;top:654.8px"><rect x=".6" y=".6" width="11.8" height="11.8" fill="#fff" stroke="#707070" stroke-width="1.5"/><path d="M3 6.5H10M6.5 3V10" stroke="#444" stroke-width="1.2"/></svg>
<svg width="13.6" height="10.8" viewBox="0 0 15 12" style="left:57.6px;top:656px"><path d="M0 1.3C0 .6 .6 0 1.3 0H5.2L6.8 1.7H13.6C14.4 1.7 15 2.3 15 3V10.7C15 11.4 14.4 12 13.6 12H1.3C.6 12 0 11.4 0 10.7Z" fill="#333"/></svg>
<div class="tn" style="left:76.5px;top:651.3px">0428</div>
<div class="abs" style="left:49px;top:683.78px;width:8px;height:0;border-top:1px dotted #c8c8c8"></div>
<svg width="13" height="13" viewBox="0 0 13 13" style="left:36px;top:677.28px"><rect x=".6" y=".6" width="11.8" height="11.8" fill="#fff" stroke="#707070" stroke-width="1.5"/><path d="M3 6.5H10M6.5 3V10" stroke="#444" stroke-width="1.2"/></svg>
<svg width="13.6" height="10.8" viewBox="0 0 15 12" style="left:57.6px;top:678.48px"><path d="M0 1.3C0 .6 .6 0 1.3 0H5.2L6.8 1.7H13.6C14.4 1.7 15 2.3 15 3V10.7C15 11.4 14.4 12 13.6 12H1.3C.6 12 0 11.4 0 10.7Z" fill="#333"/></svg>
<div class="tn" style="left:76.5px;top:673.78px">0311</div>
<div class="abs" style="left:49px;top:706.26px;width:8px;height:0;border-top:1px dotted #c8c8c8"></div>
<svg width="13" height="13" viewBox="0 0 13 13" style="left:36px;top:699.76px"><rect x=".6" y=".6" width="11.8" height="11.8" fill="#fff" stroke="#707070" stroke-width="1.5"/><path d="M3 6.5H10M6.5 3V10" stroke="#444" stroke-width="1.2"/></svg>
<svg width="13.6" height="10.8" viewBox="0 0 15 12" style="left:57.6px;top:700.96px"><path d="M0 1.3C0 .6 .6 0 1.3 0H5.2L6.8 1.7H13.6C14.4 1.7 15 2.3 15 3V10.7C15 11.4 14.4 12 13.6 12H1.3C.6 12 0 11.4 0 10.7Z" fill="#333"/></svg>
<div class="tn" style="left:76.5px;top:696.26px"><span style="letter-spacing:1.3px;padding-left:1.1px">J</span>175</div>
<div class="abs" style="left:49px;top:728.74px;width:8px;height:0;border-top:1px dotted #c8c8c8"></div>
<svg width="13" height="13" viewBox="0 0 13 13" style="left:36px;top:722.24px"><rect x=".6" y=".6" width="11.8" height="11.8" fill="#fff" stroke="#707070" stroke-width="1.5"/><path d="M3 6.5H10M6.5 3V10" stroke="#444" stroke-width="1.2"/></svg>
<svg width="13.6" height="10.8" viewBox="0 0 15 12" style="left:57.6px;top:723.44px"><path d="M0 1.3C0 .6 .6 0 1.3 0H5.2L6.8 1.7H13.6C14.4 1.7 15 2.3 15 3V10.7C15 11.4 14.4 12 13.6 12H1.3C.6 12 0 11.4 0 10.7Z" fill="#333"/></svg>
<div class="tn" style="left:76.5px;top:718.74px"><span style="letter-spacing:1.3px;padding-left:1.1px">J</span>149</div>
<div class="abs" style="left:49px;top:751.22px;width:8px;height:0;border-top:1px dotted #c8c8c8"></div>
<svg width="13" height="13" viewBox="0 0 13 13" style="left:36px;top:744.72px"><rect x=".6" y=".6" width="11.8" height="11.8" fill="#fff" stroke="#707070" stroke-width="1.5"/><path d="M3 6.5H10M6.5 3V10" stroke="#444" stroke-width="1.2"/></svg>
<svg width="13.6" height="10.8" viewBox="0 0 15 12" style="left:57.6px;top:745.92px"><path d="M0 1.3C0 .6 .6 0 1.3 0H5.2L6.8 1.7H13.6C14.4 1.7 15 2.3 15 3V10.7C15 11.4 14.4 12 13.6 12H1.3C.6 12 0 11.4 0 10.7Z" fill="#333"/></svg>
<div class="tn" style="left:76.5px;top:741.22px"><span style="letter-spacing:1.3px;padding-left:1.1px">J</span>002</div>
<div class="abs" style="left:49px;top:773.7px;width:8px;height:0;border-top:1px dotted #c8c8c8"></div>
<svg width="13" height="13" viewBox="0 0 13 13" style="left:36px;top:767.2px"><rect x=".6" y=".6" width="11.8" height="11.8" fill="#fff" stroke="#707070" stroke-width="1.5"/><path d="M3 6.5H10M6.5 3V10" stroke="#444" stroke-width="1.2"/></svg>
<svg width="13.6" height="10.8" viewBox="0 0 15 12" style="left:57.6px;top:768.4px"><path d="M0 1.3C0 .6 .6 0 1.3 0H5.2L6.8 1.7H13.6C14.4 1.7 15 2.3 15 3V10.7C15 11.4 14.4 12 13.6 12H1.3C.6 12 0 11.4 0 10.7Z" fill="#333"/></svg>
<div class="tn" style="left:76.5px;top:763.7px"><span style="letter-spacing:1.3px;padding-left:1.1px">J</span>003</div>
<div class="abs" style="left:179.6px;top:50px;width:5.4px;height:713px;background:#f4f4f4"></div>
<div class="abs" style="left:179.6px;top:50.5px;width:5.4px;height:574px;background:#8c8c8c;border-radius:0 0 3px 3px"></div>
</div>
<div class="abs" style="left:375px;top:89px;width:9px;height:763px;background:#f8f8f9"></div>
<div class="abs" style="left:375.5px;top:479.5px;width:8.5px;height:50px;background:#ececec"></div>
<svg width="5" height="8" viewBox="0 0 5 8" style="left:377.5px;top:500.5px"><path d="M5 0V8L0 4Z" fill="#444"/></svg>
<div class="abs card" style="left:397px;top:100px;width:1516.5px;height:98.5px">
<div class="abs" style="left:0;top:10.5px;width:1515px;height:30px">
<label class="l" style="left:15px">档号:</label>
<div class="inp" style="left:58px;width:203px">请输入档号</div>
<label class="l" style="left:275.5px">题名:</label>
<div class="inp" style="left:317.7px;width:203px">请输入题名</div>
<label class="l" style="left:536.3px">文号:</label>
<div class="inp" style="left:578.5px;width:203px">请输入文号</div>
<label class="l" style="left:795.5px">成文日期:</label>
<div class="inp" style="left:865px;width:201.5px">请输入成文日期</div>
<label class="l" style="left:1082.5px;font-weight:500;letter-spacing:.4px">是否上传PDF:</label>
<div class="inp" style="left:1174px;width:202px;height:29.5px;color:#222;border-color:#cfd2d6;padding-left:5px">所有<svg width="10" height="7" viewBox="0 0 10 7" style="right:3.8px;top:10px"><path d="M1 1.2L5 5.2L9 1.2" fill="none" stroke="#222" stroke-width="2.3"/></svg></div>
</div>
<div class="btn" style="left:1334.5px;top:50.3px;width:62px;height:30.7px;line-height:30.7px;border-radius:15.5px;background:#5c8df6"><svg width="13" height="13" viewBox="0 0 11 11" style="left:10.5px;top:9px"><circle cx="4.4" cy="4.4" r="3.3" fill="none" stroke="#fff" stroke-width="1.8"/><path d="M6.9 6.9L10.2 10.2" stroke="#fff" stroke-width="2"/></svg><span style="margin-left:16px">搜索</span></div>
<div class="btn" style="left:1400px;top:50.3px;width:60.5px;height:30.7px;line-height:30.7px;border-radius:15.5px;background:#f8a95a"><svg width="12" height="12" viewBox="0 0 12 12" style="left:10.5px;top:9.5px"><path d="M10.3 4.2A4.6 4.6 0 0 0 1.7 4.4M1.7 7.8A4.6 4.6 0 0 0 10.3 7.6" fill="none" stroke="#fff" stroke-width="1.9"/><path d="M11.8 .6V5H7.4ZM.2 11.4V7H4.6Z" fill="#fff"/></svg><span style="margin-left:14px">重置</span></div>
</div>
<div class="abs card" style="left:397px;top:209px;width:1516.5px;height:623px">
<div class="btn tb" style="left:15.4px;width:58.2px;background:#f39dac"><svg width="10" height="10" viewBox="0 0 9 9" style="left:10.5px;top:10.5px"><path d="M1.2 1.2L7.8 7.8M7.8 1.2L1.2 7.8" stroke="#fff" stroke-width="2.9"/></svg><span style="margin-left:13.5px">删除</span></div>
<div class="btn tb" style="left:78px;width:60.5px;background:#f8ac59"><svg width="12.5" height="11.4" viewBox="0 0 11 10" style="left:10.5px;top:9px"><path d="M3.8 0H7.2V3.3H9.8L5.5 7.4L1.2 3.3H3.8ZM0 6.8H2.6L5.5 9.2L8.4 6.8H11V10H0Z" fill="#fff"/></svg><span style="margin-left:15.5px">导出</span></div>
<div class="btn tb" style="left:143.4px;width:60.1px;background:#62acfb"><svg width="12.5" height="11.4" viewBox="0 0 11 10" style="left:10.5px;top:9px"><path d="M3.8 6.9H7.2V3.9H9.8L5.5 0L1.2 3.9H3.8ZM0 7.2H3V8H8V7.2H11V10H0Z" fill="#fff"/></svg><span style="margin-left:15.5px">导入</span></div>
<div class="btn tb" style="left:208px;width:86.6px;background:#5d88ea"><svg width="13" height="9.5" viewBox="0 0 14 10" style="left:10.5px;top:10px"><path d="M3.2 10A3.1 3.1 0 0 1 2.4 3.9A4.2 4.2 0 0 1 10.4 3A3.5 3.5 0 0 1 10.8 10Z" fill="#fff"/><path d="M7 3.4L9.6 6.2H8V8.4H6V6.2H4.4Z" fill="#5d88ea"/></svg><span style="margin-left:17px">一键上传</span></div>
<div class="btn tb" style="left:298.4px;width:86.8px;background:#5d88ea"><svg width="13" height="9.5" viewBox="0 0 14 10" style="left:10.5px;top:10px"><path d="M3.2 10A3.1 3.1 0 0 1 2.4 3.9A4.2 4.2 0 0 1 10.4 3A3.5 3.5 0 0 1 10.8 10Z" fill="#fff"/><path d="M7 3.4L9.6 6.2H8V8.4H6V6.2H4.4Z" fill="#5d88ea"/></svg><span style="margin-left:17px">离线上传</span></div>
<div class="btn tb" style="left:389px;width:86.8px;background:#ea536b"><svg width="13" height="9.5" viewBox="0 0 14 10" style="left:10.5px;top:10px"><path d="M3.2 10A3.1 3.1 0 0 1 2.4 3.9A4.2 4.2 0 0 1 10.4 3A3.5 3.5 0 0 1 10.8 10Z" fill="#fff"/><path d="M7 3.4L9.6 6.2H8V8.4H6V6.2H4.4Z" fill="#ea536b"/></svg><span style="margin-left:17px">失败处理</span></div>
<div class="btn tb" style="left:480px;width:83.4px;background:#ea536b"><svg width="10" height="10" viewBox="0 0 9 9" style="left:11px;top:10.5px"><path d="M1.2 1.2L7.8 7.8M7.8 1.2L1.2 7.8" stroke="#fff" stroke-width="2.9"/></svg><span style="margin-left:12px">全部删除</span></div>
<div class="abs" style="left:1330px;top:14.5px;width:171px;height:35px;border:1px solid #d9dbde;border-radius:4px;background:#fff">
<div class="abs" style="left:37.9px;top:0;width:1px;height:33px;background:#d9dbde"></div>
<div class="abs" style="left:78.4px;top:0;width:1px;height:33px;background:#d9dbde"></div>
<div class="abs" style="left:117.9px;top:0;width:1px;height:33px;background:#d9dbde"></div>
<svg width="15" height="15" viewBox="0 0 13 13" style="left:12px;top:8.5px"><circle cx="5.2" cy="5.2" r="4" fill="none" stroke="#333" stroke-width="1.9"/><path d="M8.2 8.2L12.2 12.2" stroke="#333" stroke-width="2.2"/></svg>
<svg width="14" height="14" viewBox="0 0 12 12" style="left:51.5px;top:9px"><path d="M10.3 4.2A4.6 4.6 0 0 0 1.7 4.4M1.7 7.8A4.6 4.6 0 0 0 10.3 7.6" fill="none" stroke="#333" stroke-width="1.6"/><path d="M11.6 .8V5H7.4ZM.4 11.2V7H4.6Z" fill="#333"/></svg>
<svg width="13.4" height="14.2" viewBox="0 0 13 14" style="left:91.5px;top:9px"><rect x=".8" y=".8" width="11.4" height="12.4" fill="none" stroke="#333" stroke-width="1.6"/><path d="M3.3 3.5H9.7M3.3 6H9.7M3.3 8.5H9.7M3.3 11H9.7" stroke="#555" stroke-width="1.1"/></svg>
<svg width="13.6" height="12.6" viewBox="0 0 13 13" style="left:129.8px;top:10.5px"><path d="M0 0H3.4V3.4H0ZM4.8 0H8.2V3.4H4.8ZM9.6 0H13V3.4H9.6ZM0 4.8H3.4V8.2H0ZM4.8 4.8H8.2V8.2H4.8ZM9.6 4.8H13V8.2H9.6ZM0 9.6H3.4V13H0ZM4.8 9.6H8.2V13H4.8ZM9.6 9.6H13V13H9.6Z" fill="#333"/></svg>
<svg width="8" height="4.4" viewBox="0 0 8 4" style="left:148.8px;top:15.5px"><path d="M0 0H8L4 4Z" fill="#333"/></svg>
</div>
<div class="abs" style="left:15px;top:59.4px;width:1486px;height:436px">
<div class="abs" style="left:0;top:0;width:1486px;height:41.6px;background:#eff2f7">
<div class="cb" style="left:11.6px;top:10.6px"></div>
<div class="th" style="left:142px">档号</div>
<div class="th" style="left:337.7px">页数</div>
<div class="th" style="left:389px">题名</div>
<div class="th" style="left:584.5px">著录人名</div>
<div class="th" style="left:688px">文号</div>
<div class="th" style="left:752.4px">成文日期</div>
<div class="th" style="left:857px">责任者</div>
<div class="th" style="left:935.2px">机构或问题</div>
<div class="th" style="left:1038.7px">比对时间</div>
<div class="th" style="left:1310.5px">操作</div>
</div>
<div class="row" style="top:41.6px">
<div class="cb" style="left:11.6px;top:9px"></div><svg width="11.6" height="10.8" viewBox="0 0 13 12" style="left:44px;top:12.2px"><path d="M0 0H13V8L9 12H0Z" fill="#7de884"/><path d="M9.3 12V8.3H13Z" fill="#c4f5c8"/></svg><svg width="13.5" height="10.8" viewBox="0 0 13 11" style="left:76px;top:12px"><path d="M3.5 0H12.5L10 8.2H2.2C1.4 8.2 1.2 9.6 2 9.6H10.5L10 11H1.5C0 11 -.3 9 .6 7.4Z" fill="#7de884"/></svg><svg width="14.3" height="14.3" viewBox="0 0 15 15" style="left:108.5px;top:10.6px"><rect x=".7" y=".7" width="9.6" height="9.6" rx="1.5" fill="#fff" stroke="#88e893" stroke-width="1.4"/><rect x="4.7" y="4.7" width="9.6" height="9.6" rx="1.5" fill="#fff" stroke="#88e893" stroke-width="1.4"/></svg>
<div class="c" style="left:142px">0324-WS2019-D30-012-0239</div>
<div class="c" style="left:337.7px"><span class="pk">39</span></div>
<div class="c" style="left:389px;width:188px;overflow:hidden">中小企业国际市场开拓资金<span class="pk" style="width:13px;font-weight:normal;color:#8a8a8a;overflow:hidden">...</span><span class="pk" style="width:2.8px;margin-left:13.4px">&nbsp;</span></div>
<div class="c" style="left:688px"><span class="pk" style="width:57.3px;overflow:hidden">2019<span class="dots">...</span></span></div>
<div class="c" style="left:752.4px"><span class="pk">20190629</span></div>
<div class="c" style="left:857px"><span class="pk" style="width:71px;overflow:hidden">苏州哈<span class="dots">...</span></span></div>
<div class="c" style="left:1038.7px">2024-09-18 15:2...</div>
<div class="btn ab" style="left:1175.2px;width:72.8px;background:#5b86e8"><svg width="12.5" height="11.4" viewBox="0 0 11 10" style="left:6px;top:5.5px"><path d="M7 1H1.2V9H8.6V5.6" fill="none" stroke="#fff" stroke-width="1.5"/><path d="M4.2 6.8L4.6 4.6L9 .2L10.8 2L6.4 6.4Z" fill="#fff"/></svg><span style="margin-left:13.5px">手动矫正</span></div>
<div class="btn ab" style="left:1252px;width:71.8px;background:#f8ac59"><svg width="12.5" height="12.5" viewBox="0 0 11 11" style="left:5.5px;top:5.5px"><circle cx="4.4" cy="4.4" r="3.4" fill="none" stroke="#fff" stroke-width="1.7"/><path d="M6.9 6.9L10.2 10.2" stroke="#fff" stroke-width="1.9"/></svg><span style="margin-left:12px">原文预览</span></div>
<div class="btn ab" style="left:1327.2px;width:72.2px;background:#5aacf9"><svg width="13" height="12" viewBox="0 0 12 11" style="left:6px;top:5.5px"><circle cx="3.6" cy="3.6" r="2.6" fill="none" stroke="#fff" stroke-width="1.9"/><path d="M5.6 5.4L10.6 10.2M8.4 8.2L9.8 6.8" stroke="#fff" stroke-width="1.7"/></svg><span style="margin-left:13px">识别预览</span></div>
<div class="btn ab" style="left:1403.8px;width:66.2px;background:#e6c2ac"><svg width="7.5" height="12" viewBox="0 0 7 11" style="left:7px;top:5.5px"><path d="M4.6 0L0 6H3L2 11L7 4.4H3.8Z" fill="#fff"/></svg><span style="margin-left:9px">预览对比</span></div>
</div>
<div class="row" style="top:80.95px">
<div class="cb" style="left:11.6px;top:9px"></div><svg width="11.6" height="10.8" viewBox="0 0 13 12" style="left:44px;top:12.2px"><path d="M0 0H13V8L9 12H0Z" fill="#7de884"/><path d="M9.3 12V8.3H13Z" fill="#c4f5c8"/></svg><svg width="13.5" height="10.8" viewBox="0 0 13 11" style="left:76px;top:12px"><path d="M3.5 0H12.5L10 8.2H2.2C1.4 8.2 1.2 9.6 2 9.6H10.5L10 11H1.5C0 11 -.3 9 .6 7.4Z" fill="#7de884"/></svg><svg width="14.3" height="14.3" viewBox="0 0 15 15" style="left:108.5px;top:10.6px"><rect x=".7" y=".7" width="9.6" height="9.6" rx="1.5" fill="#fff" stroke="#88e893" stroke-width="1.4"/><rect x="4.7" y="4.7" width="9.6" height="9.6" rx="1.5" fill="#fff" stroke="#88e893" stroke-width="1.4"/></svg>
<div class="c" style="left:142px">0324-WS2019-D30-012-0266</div>
<div class="c" style="left:337.7px"><span class="pk">20</span></div>
<div class="c f" style="left:389px;width:188px;overflow:hidden">资金项目拨付申请表<span class="pk" style="overflow:hidden">（IATF<span class="dots">...</span></span></div>
<div class="c" style="left:688px"><span class="pk" style="width:57.3px;overflow:hidden">2019<span class="dots">...</span></span></div>
<div class="c" style="left:752.4px"><span class="pk">20190827</span></div>
<div class="c" style="left:857px"><span class="pk" style="width:71px;overflow:hidden">立讯精<span class="dots">...</span></span></div>
<div class="c" style="left:1038.7px">2024-09-18 15:2...</div>
<div class="btn ab" style="left:1175.2px;width:72.8px;background:#5b86e8"><svg width="12.5" height="11.4" viewBox="0 0 11 10" style="left:6px;top:5.5px"><path d="M7 1H1.2V9H8.6V5.6" fill="none" stroke="#fff" stroke-width="1.5"/><path d="M4.2 6.8L4.6 4.6L9 .2L10.8 2L6.4 6.4Z" fill="#fff"/></svg><span style="margin-left:13.5px">手动矫正</span></div>
<div class="btn ab" style="left:1252px;width:71.8px;background:#f8ac59"><svg width="12.5" height="12.5" viewBox="0 0 11 11" style="left:5.5px;top:5.5px"><circle cx="4.4" cy="4.4" r="3.4" fill="none" stroke="#fff" stroke-width="1.7"/><path d="M6.9 6.9L10.2 10.2" stroke="#fff" stroke-width="1.9"/></svg><span style="margin-left:12px">原文预览</span></div>
<div class="btn ab" style="left:1327.2px;width:72.2px;background:#5aacf9"><svg width="13" height="12" viewBox="0 0 12 11" style="left:6px;top:5.5px"><circle cx="3.6" cy="3.6" r="2.6" fill="none" stroke="#fff" stroke-width="1.9"/><path d="M5.6 5.4L10.6 10.2M8.4 8.2L9.8 6.8" stroke="#fff" stroke-width="1.7"/></svg><span style="margin-left:13px">识别预览</span></div>
<div class="btn ab" style="left:1403.8px;width:66.2px;background:#e6c2ac"><svg width="7.5" height="12" viewBox="0 0 7 11" style="left:7px;top:5.5px"><path d="M4.6 0L0 6H3L2 11L7 4.4H3.8Z" fill="#fff"/></svg><span style="margin-left:9px">预览对比</span></div>
</div>
<div class="row" style="top:120.3px">
<div class="cb" style="left:11.6px;top:9px"></div><svg width="11.6" height="10.8" viewBox="0 0 13 12" style="left:44px;top:12.2px"><path d="M0 0H13V8L9 12H0Z" fill="#7de884"/><path d="M9.3 12V8.3H13Z" fill="#c4f5c8"/></svg><svg width="13.5" height="10.8" viewBox="0 0 13 11" style="left:76px;top:12px"><path d="M3.5 0H12.5L10 8.2H2.2C1.4 8.2 1.2 9.6 2 9.6H10.5L10 11H1.5C0 11 -.3 9 .6 7.4Z" fill="#7de884"/></svg><svg width="14.3" height="14.3" viewBox="0 0 15 15" style="left:108.5px;top:10.6px"><rect x=".7" y=".7" width="9.6" height="9.6" rx="1.5" fill="#fff" stroke="#88e893" stroke-width="1.4"/><rect x="4.7" y="4.7" width="9.6" height="9.6" rx="1.5" fill="#fff" stroke="#88e893" stroke-width="1.4"/></svg>
<div class="c" style="left:142px">0324-WS2019-D30-012-0272</div>
<div class="c" style="left:337.7px"><span class="pk">21</span></div>
<div class="c f" style="left:389px;width:188px;overflow:hidden">资金项目拨付申请表<span class="pk" style="overflow:hidden">（2019<span class="dots">...</span></span></div>
<div class="c" style="left:688px"><span class="pk" style="width:57.3px;overflow:hidden">2019<span class="dots">...</span></span></div>
<div class="c" style="left:752.4px"><span class="pk">20190628</span></div>
<div class="c" style="left:857px"><span class="pk" style="width:71px;overflow:hidden">密友集<span class="dots">...</span></span></div>
<div class="c" style="left:1038.7px">2024-09-18 15:2...</div>
<div class="btn ab" style="left:1175.2px;width:72.8px;background:#5b86e8"><svg width="12.5" height="11.4" viewBox="0 0 11 10" style="left:6px;top:5.5px"><path d="M7 1H1.2V9H8.6V5.6" fill="none" stroke="#fff" stroke-width="1.5"/><path d="M4.2 6.8L4.6 4.6L9 .2L10.8 2L6.4 6.4Z" fill="#fff"/></svg><span style="margin-left:13.5px">手动矫正</span></div>
<div class="btn ab" style="left:1252px;width:71.8px;background:#f8ac59"><svg width="12.5" height="12.5" viewBox="0 0 11 11" style="left:5.5px;top:5.5px"><circle cx="4.4" cy="4.4" r="3.4" fill="none" stroke="#fff" stroke-width="1.7"/><path d="M6.9 6.9L10.2 10.2" stroke="#fff" stroke-width="1.9"/></svg><span style="margin-left:12px">原文预览</span></div>
<div class="btn ab" style="left:1327.2px;width:72.2px;background:#5aacf9"><svg width="13" height="12" viewBox="0 0 12 11" style="left:6px;top:5.5px"><circle cx="3.6" cy="3.6" r="2.6" fill="none" stroke="#fff" stroke-width="1.9"/><path d="M5.6 5.4L10.6 10.2M8.4 8.2L9.8 6.8" stroke="#fff" stroke-width="1.7"/></svg><span style="margin-left:13px">识别预览</span></div>
<div class="btn ab" style="left:1403.8px;width:66.2px;background:#e6c2ac"><svg width="7.5" height="12" viewBox="0 0 7 11" style="left:7px;top:5.5px"><path d="M4.6 0L0 6H3L2 11L7 4.4H3.8Z" fill="#fff"/></svg><span style="margin-left:9px">预览对比</span></div>
</div>
<div class="row" style="top:159.65px">
<div class="cb" style="left:11.6px;top:9px"></div><svg width="11.6" height="10.8" viewBox="0 0 13 12" style="left:44px;top:12.2px"><path d="M0 0H13V8L9 12H0Z" fill="#7de884"/><path d="M9.3 12V8.3H13Z" fill="#c4f5c8"/></svg><svg width="13.5" height="10.8" viewBox="0 0 13 11" style="left:76px;top:12px"><path d="M3.5 0H12.5L10 8.2H2.2C1.4 8.2 1.2 9.6 2 9.6H10.5L10 11H1.5C0 11 -.3 9 .6 7.4Z" fill="#7de884"/></svg><svg width="14.3" height="14.3" viewBox="0 0 15 15" style="left:108.5px;top:10.6px"><rect x=".7" y=".7" width="9.6" height="9.6" rx="1.5" fill="#fff" stroke="#88e893" stroke-width="1.4"/><rect x="4.7" y="4.7" width="9.6" height="9.6" rx="1.5" fill="#fff" stroke="#88e893" stroke-width="1.4"/></svg>
<div class="c" style="left:142px">0324-WS2019-D30-012-0410</div>
<div class="c" style="left:337.7px"><span class="pk">25</span></div>
<div class="c f" style="left:389px;width:188px;overflow:hidden">资金项目拨付申请表<span class="pk" style="overflow:hidden">（知识<span class="dots">...</span></span></div>
<div class="c" style="left:688px"><span class="pk" style="width:57.3px;overflow:hidden">2019<span class="dots">...</span></span></div>
<div class="c" style="left:752.4px"><span class="pk">20190926</span></div>
<div class="c" style="left:857px"><span class="pk" style="width:71px;overflow:hidden">昆山鸿<span class="dots">...</span></span></div>
<div class="c" style="left:1038.7px">2024-09-18 15:2...</div>
<div class="btn ab" style="left:1175.2px;width:72.8px;background:#5b86e8"><svg width="12.5" height="11.4" viewBox="0 0 11 10" style="left:6px;top:5.5px"><path d="M7 1H1.2V9H8.6V5.6" fill="none" stroke="#fff" stroke-width="1.5"/><path d="M4.2 6.8L4.6 4.6L9 .2L10.8 2L6.4 6.4Z" fill="#fff"/></svg><span style="margin-left:13.5px">手动矫正</span></div>
<div class="btn ab" style="left:1252px;width:71.8px;background:#f8ac59"><svg width="12.5" height="12.5" viewBox="0 0 11 11" style="left:5.5px;top:5.5px"><circle cx="4.4" cy="4.4" r="3.4" fill="none" stroke="#fff" stroke-width="1.7"/><path d="M6.9 6.9L10.2 10.2" stroke="#fff" stroke-width="1.9"/></svg><span style="margin-left:12px">原文预览</span></div>
<div class="btn ab" style="left:1327.2px;width:72.2px;background:#5aacf9"><svg width="13" height="12" viewBox="0 0 12 11" style="left:6px;top:5.5px"><circle cx="3.6" cy="3.6" r="2.6" fill="none" stroke="#fff" stroke-width="1.9"/><path d="M5.6 5.4L10.6 10.2M8.4 8.2L9.8 6.8" stroke="#fff" stroke-width="1.7"/></svg><span style="margin-left:13px">识别预览</span></div>
<div class="btn ab" style="left:1403.8px;width:66.2px;background:#e6c2ac"><svg width="7.5" height="12" viewBox="0 0 7 11" style="left:7px;top:5.5px"><path d="M4.6 0L0 6H3L2 11L7 4.4H3.8Z" fill="#fff"/></svg><span style="margin-left:9px">预览对比</span></div>
</div>
<div class="row" style="top:199px">
<div class="cb" style="left:11.6px;top:9px"></div><svg width="11.6" height="10.8" viewBox="0 0 13 12" style="left:44px;top:12.2px"><path d="M0 0H13V8L9 12H0Z" fill="#7de884"/><path d="M9.3 12V8.3H13Z" fill="#c4f5c8"/></svg><svg width="13.5" height="10.8" viewBox="0 0 13 11" style="left:76px;top:12px"><path d="M3.5 0H12.5L10 8.2H2.2C1.4 8.2 1.2 9.6 2 9.6H10.5L10 11H1.5C0 11 -.3 9 .6 7.4Z" fill="#7de884"/></svg><svg width="14.3" height="14.3" viewBox="0 0 15 15" style="left:108.5px;top:10.6px"><rect x=".7" y=".7" width="9.6" height="9.6" rx="1.5" fill="#fff" stroke="#88e893" stroke-width="1.4"/><rect x="4.7" y="4.7" width="9.6" height="9.6" rx="1.5" fill="#fff" stroke="#88e893" stroke-width="1.4"/></svg>
<div class="c" style="left:142px">0324-WS2020-D30-004-0056</div>
<div class="c" style="left:337.7px"><span class="pk">99</span></div>
<div class="c f" style="left:389px;width:188px;overflow:hidden">资金项目拨付申请表<span class="pk" style="overflow:hidden">（医用<span class="dots">...</span></span></div>
<div class="c" style="left:688px"><span class="pk" style="width:57.3px;overflow:hidden">2019<span class="dots">...</span></span></div>
<div class="c" style="left:752.4px"><span class="pk">20200618</span></div>
<div class="c" style="left:857px"><span class="pk" style="width:71px;overflow:hidden">昆山岱<span class="dots">...</span></span></div>
<div class="c" style="left:1038.7px">2024-09-18 15:2...</div>
<div class="btn ab" style="left:1175.2px;width:72.8px;background:#5b86e8"><svg width="12.5" height="11.4" viewBox="0 0 11 10" style="left:6px;top:5.5px"><path d="M7 1H1.2V9H8.6V5.6" fill="none" stroke="#fff" stroke-width="1.5"/><path d="M4.2 6.8L4.6 4.6L9 .2L10.8 2L6.4 6.4Z" fill="#fff"/></svg><span style="margin-left:13.5px">手动矫正</span></div>
<div class="btn ab" style="left:1252px;width:71.8px;background:#f8ac59"><svg width="12.5" height="12.5" viewBox="0 0 11 11" style="left:5.5px;top:5.5px"><circle cx="4.4" cy="4.4" r="3.4" fill="none" stroke="#fff" stroke-width="1.7"/><path d="M6.9 6.9L10.2 10.2" stroke="#fff" stroke-width="1.9"/></svg><span style="margin-left:12px">原文预览</span></div>
<div class="btn ab" style="left:1327.2px;width:72.2px;background:#5aacf9"><svg width="13" height="12" viewBox="0 0 12 11" style="left:6px;top:5.5px"><circle cx="3.6" cy="3.6" r="2.6" fill="none" stroke="#fff" stroke-width="1.9"/><path d="M5.6 5.4L10.6 10.2M8.4 8.2L9.8 6.8" stroke="#fff" stroke-width="1.7"/></svg><span style="margin-left:13px">识别预览</span></div>
<div class="btn ab" style="left:1403.8px;width:66.2px;background:#e6c2ac"><svg width="7.5" height="12" viewBox="0 0 7 11" style="left:7px;top:5.5px"><path d="M4.6 0L0 6H3L2 11L7 4.4H3.8Z" fill="#fff"/></svg><span style="margin-left:9px">预览对比</span></div>
</div>
<div class="row" style="top:238.35px">
<div class="cb" style="left:11.6px;top:9px"></div><svg width="11.6" height="10.8" viewBox="0 0 13 12" style="left:44px;top:12.2px"><path d="M0 0H13V8L9 12H0Z" fill="#7de884"/><path d="M9.3 12V8.3H13Z" fill="#c4f5c8"/></svg><svg width="13.5" height="10.8" viewBox="0 0 13 11" style="left:76px;top:12px"><path d="M3.5 0H12.5L10 8.2H2.2C1.4 8.2 1.2 9.6 2 9.6H10.5L10 11H1.5C0 11 -.3 9 .6 7.4Z" fill="#7de884"/></svg><svg width="14.3" height="14.3" viewBox="0 0 15 15" style="left:108.5px;top:10.6px"><rect x=".7" y=".7" width="9.6" height="9.6" rx="1.5" fill="#fff" stroke="#88e893" stroke-width="1.4"/><rect x="4.7" y="4.7" width="9.6" height="9.6" rx="1.5" fill="#fff" stroke="#88e893" stroke-width="1.4"/></svg>
<div class="c" style="left:142px">0324-WS2020-D30-004-0057</div>
<div class="c" style="left:337.7px"><span class="pk">29</span></div>
<div class="c f" style="left:389px;width:188px;overflow:hidden"><span class="pk" style="overflow:hidden">资金项目拨付申请表（ISO1<span class="dots">...</span></span></div>
<div class="c" style="left:688px"><span class="pk" style="width:57.3px;overflow:hidden">2019<span class="dots">...</span></span></div>
<div class="c" style="left:752.4px"><span class="pk">20200618</span></div>
<div class="c" style="left:857px"><span class="pk" style="width:71px;overflow:hidden">昆山岱<span class="dots">...</span></span></div>
<div class="c" style="left:1038.7px">2024-09-18 15:2...</div>
<div class="btn ab" style="left:1175.2px;width:72.8px;background:#5b86e8"><svg width="12.5" height="11.4" viewBox="0 0 11 10" style="left:6px;top:5.5px"><path d="M7 1H1.2V9H8.6V5.6" fill="none" stroke="#fff" stroke-width="1.5"/><path d="M4.2 6.8L4.6 4.6L9 .2L10.8 2L6.4 6.4Z" fill="#fff"/></svg><span style="margin-left:13.5px">手动矫正</span></div>
<div class="btn ab" style="left:1252px;width:71.8px;background:#f8ac59"><svg width="12.5" height="12.5" viewBox="0 0 11 11" style="left:5.5px;top:5.5px"><circle cx="4.4" cy="4.4" r="3.4" fill="none" stroke="#fff" stroke-width="1.7"/><path d="M6.9 6.9L10.2 10.2" stroke="#fff" stroke-width="1.9"/></svg><span style="margin-left:12px">原文预览</span></div>
<div class="btn ab" style="left:1327.2px;width:72.2px;background:#5aacf9"><svg width="13" height="12" viewBox="0 0 12 11" style="left:6px;top:5.5px"><circle cx="3.6" cy="3.6" r="2.6" fill="none" stroke="#fff" stroke-width="1.9"/><path d="M5.6 5.4L10.6 10.2M8.4 8.2L9.8 6.8" stroke="#fff" stroke-width="1.7"/></svg><span style="margin-left:13px">识别预览</span></div>
<div class="btn ab" style="left:1403.8px;width:66.2px;background:#e6c2ac"><svg width="7.5" height="12" viewBox="0 0 7 11" style="left:7px;top:5.5px"><path d="M4.6 0L0 6H3L2 11L7 4.4H3.8Z" fill="#fff"/></svg><span style="margin-left:9px">预览对比</span></div>
</div>
<div class="row" style="top:277.7px">
<div class="cb" style="left:11.6px;top:9px"></div><svg width="11.6" height="10.8" viewBox="0 0 13 12" style="left:44px;top:12.2px"><path d="M0 0H13V8L9 12H0Z" fill="#7de884"/><path d="M9.3 12V8.3H13Z" fill="#c4f5c8"/></svg><svg width="13.5" height="10.8" viewBox="0 0 13 11" style="left:76px;top:12px"><path d="M3.5 0H12.5L10 8.2H2.2C1.4 8.2 1.2 9.6 2 9.6H10.5L10 11H1.5C0 11 -.3 9 .6 7.4Z" fill="#7de884"/></svg><svg width="14.3" height="14.3" viewBox="0 0 15 15" style="left:108.5px;top:10.6px"><rect x=".7" y=".7" width="9.6" height="9.6" rx="1.5" fill="#fff" stroke="#88e893" stroke-width="1.4"/><rect x="4.7" y="4.7" width="9.6" height="9.6" rx="1.5" fill="#fff" stroke="#88e893" stroke-width="1.4"/></svg>
<div class="c" style="left:142px">0324-WS2020-D30-004-0070</div>
<div class="c" style="left:337.7px"><span class="pk">27</span></div>
<div class="c f" style="left:389px;width:188px;overflow:hidden">资金项目拨付申请<span class="pk" style="overflow:hidden">表（管理<span class="dots">...</span></span></div>
<div class="c" style="left:688px"><span class="pk" style="width:57.3px;overflow:hidden">2019<span class="dots">...</span></span></div>
<div class="c" style="left:752.4px"><span class="pk">20200618</span></div>
<div class="c" style="left:857px"><span class="pk" style="width:71px;overflow:hidden">苏州天<span class="dots">...</span></span></div>
<div class="c" style="left:1038.7px">2024-09-18 15:2...</div>
<div class="btn ab" style="left:1175.2px;width:72.8px;background:#5b86e8"><svg width="12.5" height="11.4" viewBox="0 0 11 10" style="left:6px;top:5.5px"><path d="M7 1H1.2V9H8.6V5.6" fill="none" stroke="#fff" stroke-width="1.5"/><path d="M4.2 6.8L4.6 4.6L9 .2L10.8 2L6.4 6.4Z" fill="#fff"/></svg><span style="margin-left:13.5px">手动矫正</span></div>
<div class="btn ab" style="left:1252px;width:71.8px;background:#f8ac59"><svg width="12.5" height="12.5" viewBox="0 0 11 11" style="left:5.5px;top:5.5px"><circle cx="4.4" cy="4.4" r="3.4" fill="none" stroke="#fff" stroke-width="1.7"/><path d="M6.9 6.9L10.2 10.2" stroke="#fff" stroke-width="1.9"/></svg><span style="margin-left:12px">原文预览</span></div>
<div class="btn ab" style="left:1327.2px;width:72.2px;background:#5aacf9"><svg width="13" height="12" viewBox="0 0 12 11" style="left:6px;top:5.5px"><circle cx="3.6" cy="3.6" r="2.6" fill="none" stroke="#fff" stroke-width="1.9"/><path d="M5.6 5.4L10.6 10.2M8.4 8.2L9.8 6.8" stroke="#fff" stroke-width="1.7"/></svg><span style="margin-left:13px">识别预览</span></div>
<div class="btn ab" style="left:1403.8px;width:66.2px;background:#e6c2ac"><svg width="7.5" height="12" viewBox="0 0 7 11" style="left:7px;top:5.5px"><path d="M4.6 0L0 6H3L2 11L7 4.4H3.8Z" fill="#fff"/></svg><span style="margin-left:9px">预览对比</span></div>
</div>
<div class="row" style="top:317.05px">
<div class="cb" style="left:11.6px;top:9px"></div><svg width="11.6" height="10.8" viewBox="0 0 13 12" style="left:44px;top:12.2px"><path d="M0 0H13V8L9 12H0Z" fill="#7de884"/><path d="M9.3 12V8.3H13Z" fill="#c4f5c8"/></svg><svg width="13.5" height="10.8" viewBox="0 0 13 11" style="left:76px;top:12px"><path d="M3.5 0H12.5L10 8.2H2.2C1.4 8.2 1.2 9.6 2 9.6H10.5L10 11H1.5C0 11 -.3 9 .6 7.4Z" fill="#7de884"/></svg><svg width="14.3" height="14.3" viewBox="0 0 15 15" style="left:108.5px;top:10.6px"><rect x=".7" y=".7" width="9.6" height="9.6" rx="1.5" fill="#fff" stroke="#88e893" stroke-width="1.4"/><rect x="4.7" y="4.7" width="9.6" height="9.6" rx="1.5" fill="#fff" stroke="#88e893" stroke-width="1.4"/></svg>
<div class="c" style="left:142px">0324-WS2020-D30-004-0242</div>
<div class="c" style="left:337.7px"><span class="pk">32</span></div>
<div class="c f" style="left:389px;width:188px;overflow:hidden">资金项目拨付申请表<span class="pk" style="overflow:hidden">（ISO9<span class="dots">...</span></span></div>
<div class="c" style="left:688px"><span class="pk" style="width:57.3px;overflow:hidden">2020<span class="dots">...</span></span></div>
<div class="c" style="left:752.4px"><span class="pk">20200922</span></div>
<div class="c" style="left:857px"><span class="pk" style="width:71px;overflow:hidden">昆山佳<span class="dots">...</span></span></div>
<div class="c" style="left:1038.7px">2024-09-18 15:2...</div>
<div class="btn ab" style="left:1175.2px;width:72.8px;background:#5b86e8"><svg width="12.5" height="11.4" viewBox="0 0 11 10" style="left:6px;top:5.5px"><path d="M7 1H1.2V9H8.6V5.6" fill="none" stroke="#fff" stroke-width="1.5"/><path d="M4.2 6.8L4.6 4.6L9 .2L10.8 2L6.4 6.4Z" fill="#fff"/></svg><span style="margin-left:13.5px">手动矫正</span></div>
<div class="btn ab" style="left:1252px;width:71.8px;background:#f8ac59"><svg width="12.5" height="12.5" viewBox="0 0 11 11" style="left:5.5px;top:5.5px"><circle cx="4.4" cy="4.4" r="3.4" fill="none" stroke="#fff" stroke-width="1.7"/><path d="M6.9 6.9L10.2 10.2" stroke="#fff" stroke-width="1.9"/></svg><span style="margin-left:12px">原文预览</span></div>
<div class="btn ab" style="left:1327.2px;width:72.2px;background:#5aacf9"><svg width="13" height="12" viewBox="0 0 12 11" style="left:6px;top:5.5px"><circle cx="3.6" cy="3.6" r="2.6" fill="none" stroke="#fff" stroke-width="1.9"/><path d="M5.6 5.4L10.6 10.2M8.4 8.2L9.8 6.8" stroke="#fff" stroke-width="1.7"/></svg><span style="margin-left:13px">识别预览</span></div>
<div class="btn ab" style="left:1403.8px;width:66.2px;background:#e6c2ac"><svg width="7.5" height="12" viewBox="0 0 7 11" style="left:7px;top:5.5px"><path d="M4.6 0L0 6H3L2 11L7 4.4H3.8Z" fill="#fff"/></svg><span style="margin-left:9px">预览对比</span></div>
</div>
<div class="row" style="top:356.4px">
<div class="cb" style="left:11.6px;top:9px"></div><svg width="11.6" height="10.8" viewBox="0 0 13 12" style="left:44px;top:12.2px"><path d="M0 0H13V8L9 12H0Z" fill="#7de884"/><path d="M9.3 12V8.3H13Z" fill="#c4f5c8"/></svg><svg width="13.5" height="10.8" viewBox="0 0 13 11" style="left:76px;top:12px"><path d="M3.5 0H12.5L10 8.2H2.2C1.4 8.2 1.2 9.6 2 9.6H10.5L10 11H1.5C0 11 -.3 9 .6 7.4Z" fill="#7de884"/></svg><svg width="14.3" height="14.3" viewBox="0 0 15 15" style="left:108.5px;top:10.6px"><rect x=".7" y=".7" width="9.6" height="9.6" rx="1.5" fill="#fff" stroke="#88e893" stroke-width="1.4"/><rect x="4.7" y="4.7" width="9.6" height="9.6" rx="1.5" fill="#fff" stroke="#88e893" stroke-width="1.4"/></svg>
<div class="c" style="left:142px">0324-WS2020-D30-004-0243</div>
<div class="c" style="left:337.7px"><span class="pk">33</span></div>
<div class="c f" style="left:389px;width:188px;overflow:hidden">资金项目拨付申请表<span class="pk" style="overflow:hidden">（OHS<span class="dots">...</span></span></div>
<div class="c" style="left:688px"><span class="pk" style="width:57.3px;overflow:hidden">2020<span class="dots">...</span></span></div>
<div class="c" style="left:752.4px"><span class="pk">20200922</span></div>
<div class="c" style="left:857px"><span class="pk" style="width:71px;overflow:hidden">昆山佳<span class="dots">...</span></span></div>
<div class="c" style="left:1038.7px">2024-09-18 15:2...</div>
<div class="btn ab" style="left:1175.2px;width:72.8px;background:#5b86e8"><svg width="12.5" height="11.4" viewBox="0 0 11 10" style="left:6px;top:5.5px"><path d="M7 1H1.2V9H8.6V5.6" fill="none" stroke="#fff" stroke-width="1.5"/><path d="M4.2 6.8L4.6 4.6L9 .2L10.8 2L6.4 6.4Z" fill="#fff"/></svg><span style="margin-left:13.5px">手动矫正</span></div>
<div class="btn ab" style="left:1252px;width:71.8px;background:#f8ac59"><svg width="12.5" height="12.5" viewBox="0 0 11 11" style="left:5.5px;top:5.5px"><circle cx="4.4" cy="4.4" r="3.4" fill="none" stroke="#fff" stroke-width="1.7"/><path d="M6.9 6.9L10.2 10.2" stroke="#fff" stroke-width="1.9"/></svg><span style="margin-left:12px">原文预览</span></div>
<div class="btn ab" style="left:1327.2px;width:72.2px;background:#5aacf9"><svg width="13" height="12" viewBox="0 0 12 11" style="left:6px;top:5.5px"><circle cx="3.6" cy="3.6" r="2.6" fill="none" stroke="#fff" stroke-width="1.9"/><path d="M5.6 5.4L10.6 10.2M8.4 8.2L9.8 6.8" stroke="#fff" stroke-width="1.7"/></svg><span style="margin-left:13px">识别预览</span></div>
<div class="btn ab" style="left:1403.8px;width:66.2px;background:#e6c2ac"><svg width="7.5" height="12" viewBox="0 0 7 11" style="left:7px;top:5.5px"><path d="M4.6 0L0 6H3L2 11L7 4.4H3.8Z" fill="#fff"/></svg><span style="margin-left:9px">预览对比</span></div>
</div>
<div class="row" style="top:395.75px">
<div class="cb" style="left:11.6px;top:9px"></div><svg width="11.6" height="10.8" viewBox="0 0 13 12" style="left:44px;top:12.2px"><path d="M0 0H13V8L9 12H0Z" fill="#7de884"/><path d="M9.3 12V8.3H13Z" fill="#c4f5c8"/></svg><svg width="13.5" height="10.8" viewBox="0 0 13 11" style="left:76px;top:12px"><path d="M3.5 0H12.5L10 8.2H2.2C1.4 8.2 1.2 9.6 2 9.6H10.5L10 11H1.5C0 11 -.3 9 .6 7.4Z" fill="#7de884"/></svg><svg width="14.3" height="14.3" viewBox="0 0 15 15" style="left:108.5px;top:10.6px"><rect x=".7" y=".7" width="9.6" height="9.6" rx="1.5" fill="#fff" stroke="#88e893" stroke-width="1.4"/><rect x="4.7" y="4.7" width="9.6" height="9.6" rx="1.5" fill="#fff" stroke="#88e893" stroke-width="1.4"/></svg>
<div class="c" style="left:142px">0324-WS2020-D30-004-0459</div>
<div class="c" style="left:337.7px"><span class="pk">12</span></div>
<div class="c f" style="left:389px;width:188px;overflow:hidden">资金项目拨付申请表<span class="pk" style="overflow:hidden">（2020<span class="dots">...</span></span></div>
<div class="c" style="left:688px"><span class="pk" style="width:57.3px;overflow:hidden">2020<span class="dots">...</span></span></div>
<div class="c" style="left:752.4px">20200<span class="gn">715</span></div>
<div class="c" style="left:857px"><span class="pk" style="width:71px;overflow:hidden">昆山云<span class="dots">...</span></span></div>
<div class="c" style="left:1038.7px">2024-09-18 15:2...</div>
<div class="btn ab" style="left:1175.2px;width:72.8px;background:#5b86e8"><svg width="12.5" height="11.4" viewBox="0 0 11 10" style="left:6px;top:5.5px"><path d="M7 1H1.2V9H8.6V5.6" fill="none" stroke="#fff" stroke-width="1.5"/><path d="M4.2 6.8L4.6 4.6L9 .2L10.8 2L6.4 6.4Z" fill="#fff"/></svg><span style="margin-left:13.5px">手动矫正</span></div>
<div class="btn ab" style="left:1252px;width:71.8px;background:#f8ac59"><svg width="12.5" height="12.5" viewBox="0 0 11 11" style="left:5.5px;top:5.5px"><circle cx="4.4" cy="4.4" r="3.4" fill="none" stroke="#fff" stroke-width="1.7"/><path d="M6.9 6.9L10.2 10.2" stroke="#fff" stroke-width="1.9"/></svg><span style="margin-left:12px">原文预览</span></div>
<div class="btn ab" style="left:1327.2px;width:72.2px;background:#5aacf9"><svg width="13" height="12" viewBox="0 0 12 11" style="left:6px;top:5.5px"><circle cx="3.6" cy="3.6" r="2.6" fill="none" stroke="#fff" stroke-width="1.9"/><path d="M5.6 5.4L10.6 10.2M8.4 8.2L9.8 6.8" stroke="#fff" stroke-width="1.7"/></svg><span style="margin-left:13px">识别预览</span></div>
<div class="btn ab" style="left:1403.8px;width:66.2px;background:#e6c2ac"><svg width="7.5" height="12" viewBox="0 0 7 11" style="left:7px;top:5.5px"><path d="M4.6 0L0 6H3L2 11L7 4.4H3.8Z" fill="#fff"/></svg><span style="margin-left:9px">预览对比</span></div>
</div>
<div class="row" style="top:435.1px;height:1px"></div>
</div>
<div class="abs" style="left:0;top:504.5px;width:1515px;height:36px">
<div class="abs" style="left:15.4px;top:0;line-height:34px;white-space:nowrap">第 1 到 10 条，共 7208 条记录。</div>
<div class="abs" style="left:211.5px;top:1px;width:54px;height:34px;border:1px solid #d9dbde;border-radius:3px;line-height:32px;padding-left:13px;color:#555;font-size:14px">10<svg width="7" height="4" viewBox="0 0 8 4" style="left:34px;top:15px"><path d="M0 4H8L4 0Z" fill="#555"/></svg></div>
<div class="abs" style="left:269px;top:0;line-height:34px;white-space:nowrap">条记录每页</div>
<div class="pg" style="left:1079.3px;width:32.2px;border-radius:4px 0 0 4px">‹</div>
<div class="pg" style="left:1110.5px;width:32.5px;background:#f4f4f4">1</div>
<div class="pg" style="left:1142px;width:32.7px">2</div>
<div class="pg" style="left:1173.7px;width:34.3px">3</div>
<div class="pg" style="left:1207px;width:33.6px">4</div>
<div class="pg" style="left:1239.6px;width:32.7px">5</div>
<div class="pg" style="left:1271.3px;width:38.7px;color:#aaa">...</div>
<div class="pg" style="left:1309px;width:47.2px">721</div>
<div class="pg" style="left:1355.2px;width:31px;border-radius:0 4px 4px 0">›</div>
<div class="pg" style="left:1390.4px;width:51px;border-color:#e5e6e7">1</div>
<div class="pg" style="left:1446.5px;width:54.5px;border-color:#ccc;border-radius:3px;color:#555">跳转</div>
</div>
</div>
</div></body></html>
